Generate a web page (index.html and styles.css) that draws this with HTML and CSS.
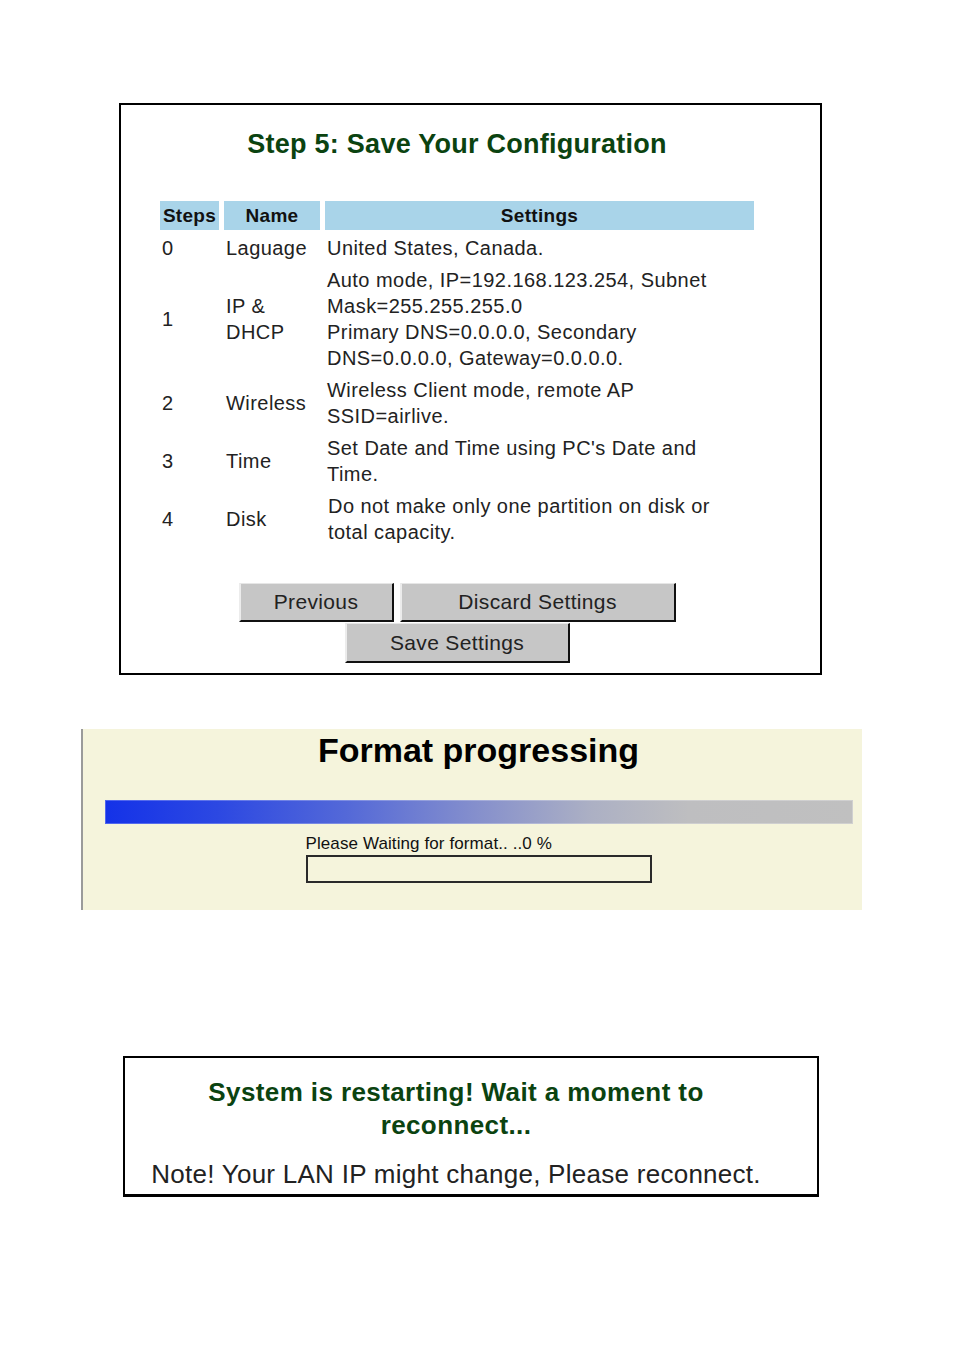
FILE: index.html
```html
<!DOCTYPE html>
<html>
<head>
<meta charset="utf-8">
<link rel="stylesheet" href="styles.css">
</head>
<body>
<div class="page">
  <section class="panel config">
    <h1 class="config-title">Step 5: Save Your Configuration</h1>
    <table class="steps">
      <colgroup>
        <col class="c-step"><col class="c-name"><col class="c-set">
      </colgroup>
      <thead>
        <tr><th>Steps</th><th>Name</th><th>Settings</th></tr>
      </thead>
      <tbody>
        <tr><td>0</td><td>Laguage</td><td>United States, Canada.</td></tr>
        <tr><td>1</td><td>IP &amp;<br>DHCP</td><td>Auto mode, IP=192.168.123.254, Subnet<br>Mask=255.255.255.0<br>Primary DNS=0.0.0.0, Secondary<br>DNS=0.0.0.0, Gateway=0.0.0.0.</td></tr>
        <tr><td>2</td><td>Wireless</td><td>Wireless Client mode, remote AP<br>SSID=airlive.</td></tr>
        <tr><td>3</td><td>Time</td><td>Set Date and Time using PC's Date and<br>Time.</td></tr>
        <tr><td>4</td><td>Disk</td><td class="shift">Do not make only one partition on disk or<br>total capacity.</td></tr>
      </tbody>
    </table>
    <div class="btn-row first">
      <button class="btn btn-prev">Previous</button>
      <button class="btn btn-discard">Discard Settings</button>
    </div>
    <div class="btn-row">
      <button class="btn btn-save">Save Settings</button>
    </div>
  </section>

  <section class="format">
    <h2 class="format-title">Format progressing</h2>
    <div class="grad-bar"></div>
    <div class="wait">
      <div class="wait-label">Please Waiting for format.. ..0 %</div>
      <div class="wait-box"></div>
    </div>
  </section>

  <section class="panel restart">
    <h2 class="restart-title">System is restarting! Wait a moment to<br>reconnect...</h2>
    <p class="restart-note">Note! Your LAN IP might change, Please reconnect.</p>
  </section>
</div>
</body>
</html>
```

FILE: styles.css
```css
html, body {
  margin: 0;
  padding: 0;
  background: #ffffff;
}
body {
  font-family: "Liberation Sans", Arial, sans-serif;
  color: #222;
}
.page {
  padding-top: 103px;
  display: flex;
  flex-direction: column;
}
.panel {
  box-sizing: border-box;
  border: 2px solid #000;
  background: #fff;
}
.config {
  margin-left: 119px;
  width: 703px;
  height: 572px;
  padding: 0 27px 0 0;
}
.config-title {
  margin: 23px 0 0 0;
  font-size: 27px;
  line-height: 32px;
  font-weight: bold;
  color: #0b4310;
  text-align: center;
  letter-spacing: 0.25px;
}
.steps {
  margin: 37px 0 0 34px;
  width: 604px;
  table-layout: fixed;
  border-collapse: separate;
  border-spacing: 5px 4px;
}
.c-step { width: 59px; }
.c-name { width: 96px; }
.c-set { width: 429px; }
.steps th {
  background: #a9d4e9;
  height: 29px;
  line-height: 29px;
  padding: 0;
  font-size: 19px;
  font-weight: bold;
  color: #111;
  text-align: center;
  letter-spacing: 0.3px;
}
.steps td {
  padding: 1px 2px;
  font-size: 20px;
  line-height: 26px;
  vertical-align: middle;
  color: #222;
  white-space: nowrap;
  letter-spacing: 0.45px;
}
.steps td.shift {
  padding-left: 3px;
}
.btn-row {
  display: flex;
  justify-content: center;
  gap: 6px;
}
.btn-row.first {
  margin-top: 33px;
}
.btn {
  box-sizing: border-box;
  background: #c6c6c6;
  border-top: 1px solid #e6e6e6;
  border-left: 2px solid #ececec;
  border-right: 2px solid #111;
  border-bottom: 2px solid #111;
  font-family: "Liberation Sans", Arial, sans-serif;
  font-size: 21px;
  color: #222;
  padding: 0;
  margin: 0;
  letter-spacing: 0.35px;
}
.btn-prev { width: 155px; height: 39px; }
.btn-discard { width: 276px; height: 39px; }
.btn-save { width: 225px; height: 40px; margin-top: 1px; }

.format {
  box-sizing: border-box;
  margin-top: 54px;
  margin-left: 81px;
  width: 781px;
  height: 181px;
  background: #f5f4dc;
  border-left: 2px solid #9a9a9a;
  padding: 1px 0 0 12px;
}
.format-title {
  margin: 0;
  font-size: 34px;
  line-height: 40px;
  font-weight: bold;
  color: #000;
  text-align: center;
}
.grad-bar {
  margin: 30px 0 0 10px;
  width: 748px;
  height: 24px;
  background: linear-gradient(to right, #1432e8 0%, #2c48e2 15%, #5368d8 32%, #8690cc 50%, #acb0c4 65%, #bebec0 78%, #c0c0c0 100%);
  box-shadow: inset 0 0 0 1px rgba(255, 255, 255, 0.25);
}
.wait {
  width: 346px;
  margin: 10px auto 0 auto;
}
.wait-label {
  font-size: 17px;
  line-height: 20px;
  color: #111;
  white-space: nowrap;
  letter-spacing: 0.1px;
}
.wait-box {
  box-sizing: border-box;
  margin-top: 1px;
  width: 346px;
  height: 28px;
  border: 2px solid #2a2a2a;
}

.restart {
  margin-top: 146px;
  margin-left: 123px;
  width: 696px;
  height: 141px;
  padding: 18px 30px 0 0;
  border-bottom-width: 3px;
}
.restart-title {
  margin: 0;
  font-size: 26px;
  line-height: 33px;
  font-weight: bold;
  color: #0b4310;
  text-align: center;
  letter-spacing: 0.4px;
}
.restart-note {
  margin: 16px 0 0 0;
  font-size: 26px;
  line-height: 32px;
  color: #222;
  text-align: center;
  white-space: nowrap;
  letter-spacing: 0.27px;
}
```
